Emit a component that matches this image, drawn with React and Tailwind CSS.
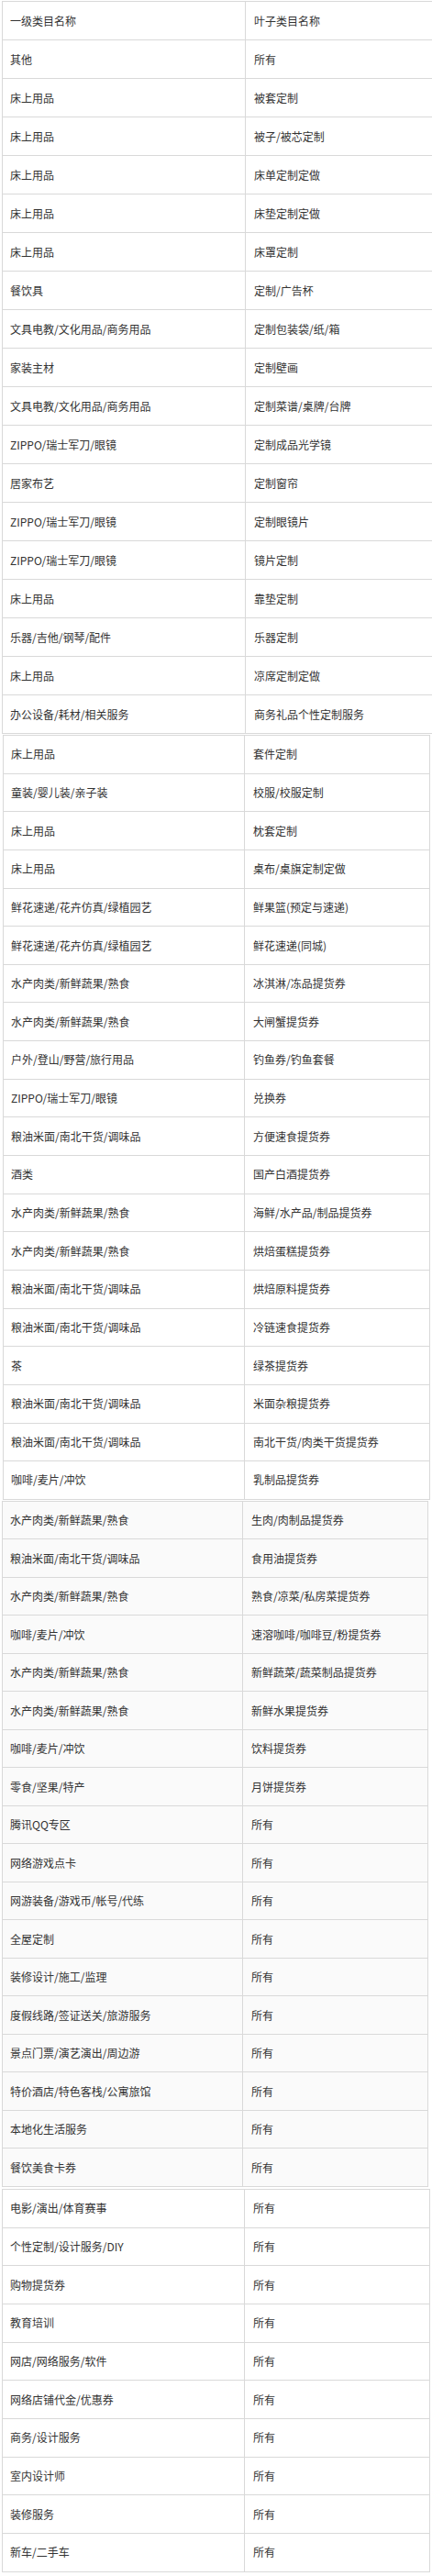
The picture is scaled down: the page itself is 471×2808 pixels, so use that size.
import React from "react";

// 四张截图拼接而成的类目对照表，每段边框/列宽略有差异
const segA = [
  ["一级类目名称", "叶子类目名称"],
  ["其他", "所有"],
  ["床上用品", "被套定制"],
  ["床上用品", "被子/被芯定制"],
  ["床上用品", "床单定制定做"],
  ["床上用品", "床垫定制定做"],
  ["床上用品", "床罩定制"],
  ["餐饮具", "定制/广告杯"],
  ["文具电教/文化用品/商务用品", "定制包装袋/纸/箱"],
  ["家装主材", "定制壁画"],
  ["文具电教/文化用品/商务用品", "定制菜谱/桌牌/台牌"],
  ["ZIPPO/瑞士军刀/眼镜", "定制成品光学镜"],
  ["居家布艺", "定制窗帘"],
  ["ZIPPO/瑞士军刀/眼镜", "定制眼镜片"],
  ["ZIPPO/瑞士军刀/眼镜", "镜片定制"],
  ["床上用品", "靠垫定制"],
  ["乐器/吉他/钢琴/配件", "乐器定制"],
  ["床上用品", "凉席定制定做"],
  ["办公设备/耗材/相关服务", "商务礼品个性定制服务"],
];

const segB = [
  ["床上用品", "套件定制"],
  ["童装/婴儿装/亲子装", "校服/校服定制"],
  ["床上用品", "枕套定制"],
  ["床上用品", "桌布/桌旗定制定做"],
  ["鲜花速递/花卉仿真/绿植园艺", "鲜果篮(预定与速递)"],
  ["鲜花速递/花卉仿真/绿植园艺", "鲜花速递(同城)"],
  ["水产肉类/新鲜蔬果/熟食", "冰淇淋/冻品提货券"],
  ["水产肉类/新鲜蔬果/熟食", "大闸蟹提货券"],
  ["户外/登山/野营/旅行用品", "钓鱼券/钓鱼套餐"],
  ["ZIPPO/瑞士军刀/眼镜", "兑换券"],
  ["粮油米面/南北干货/调味品", "方便速食提货券"],
  ["酒类", "国产白酒提货券"],
  ["水产肉类/新鲜蔬果/熟食", "海鲜/水产品/制品提货券"],
  ["水产肉类/新鲜蔬果/熟食", "烘焙蛋糕提货券"],
  ["粮油米面/南北干货/调味品", "烘焙原料提货券"],
  ["粮油米面/南北干货/调味品", "冷链速食提货券"],
  ["茶", "绿茶提货券"],
  ["粮油米面/南北干货/调味品", "米面杂粮提货券"],
  ["粮油米面/南北干货/调味品", "南北干货/肉类干货提货券"],
  ["咖啡/麦片/冲饮", "乳制品提货券"],
];

const segC = [
  ["水产肉类/新鲜蔬果/熟食", "生肉/肉制品提货券"],
  ["粮油米面/南北干货/调味品", "食用油提货券"],
  ["水产肉类/新鲜蔬果/熟食", "熟食/凉菜/私房菜提货券"],
  ["咖啡/麦片/冲饮", "速溶咖啡/咖啡豆/粉提货券"],
  ["水产肉类/新鲜蔬果/熟食", "新鲜蔬菜/蔬菜制品提货券"],
  ["水产肉类/新鲜蔬果/熟食", "新鲜水果提货券"],
  ["咖啡/麦片/冲饮", "饮料提货券"],
  ["零食/坚果/特产", "月饼提货券"],
  ["腾讯QQ专区", "所有"],
  ["网络游戏点卡", "所有"],
  ["网游装备/游戏币/帐号/代练", "所有"],
  ["全屋定制", "所有"],
  ["装修设计/施工/监理", "所有"],
  ["度假线路/签证送关/旅游服务", "所有"],
  ["景点门票/演艺演出/周边游", "所有"],
  ["特价酒店/特色客栈/公寓旅馆", "所有"],
  ["本地化生活服务", "所有"],
  ["餐饮美食卡券", "所有"],
];

const segD = [
  ["电影/演出/体育赛事", "所有"],
  ["个性定制/设计服务/DIY", "所有"],
  ["购物提货券", "所有"],
  ["教育培训", "所有"],
  ["网店/网络服务/软件", "所有"],
  ["网络店铺代金/优惠券", "所有"],
  ["商务/设计服务", "所有"],
  ["室内设计师", "所有"],
  ["装修服务", "所有"],
  ["新车/二手车", "所有"],
];

function Segment({ rows, className, leftClass, rowClass }) {
  return (
    <div className={`border-t border-l border-[#d9d9d9] ${className}`}>
      {rows.map(([a, b], i) => (
        <div key={i} className={`flex border-b border-[#d9d9d9] ${rowClass}`}>
          <div className={`flex items-center pl-2 border-r border-[#d9d9d9] ${leftClass}`}>{a}</div>
          <div className="flex-1 flex items-center pl-[9px]">{b}</div>
        </div>
      ))}
    </div>
  );
}

export default function App() {
  return (
    <div
      className="w-[471px] h-[2808px] overflow-hidden bg-white text-[12px] leading-none text-[#333]"
      style={{ fontFamily: '"Noto Sans CJK SC", "Noto Sans", sans-serif' }}
    >
      <Segment
        rows={segA}
        className="mt-[1px] ml-[2px] w-[469px]"
        leftClass="w-[265px]"
        rowClass="h-[42px]"
      />
      <Segment
        rows={segB}
        className="mt-[1px] ml-[3px] w-[466px] border-r bg-white"
        leftClass="w-[263px]"
        rowClass="h-[41.65px]"
      />
      <Segment
        rows={segC}
        className="mt-[1px] ml-[2px] w-[465px] border-r bg-[#fafafa]"
        leftClass="w-[262px]"
        rowClass="h-[41.5px]"
      />
      <Segment
        rows={segD}
        className="mt-[2px] ml-[2px] w-[467px] border-r bg-white"
        leftClass="w-[264px]"
        rowClass="h-[41.7px]"
      />
    </div>
  );
}
